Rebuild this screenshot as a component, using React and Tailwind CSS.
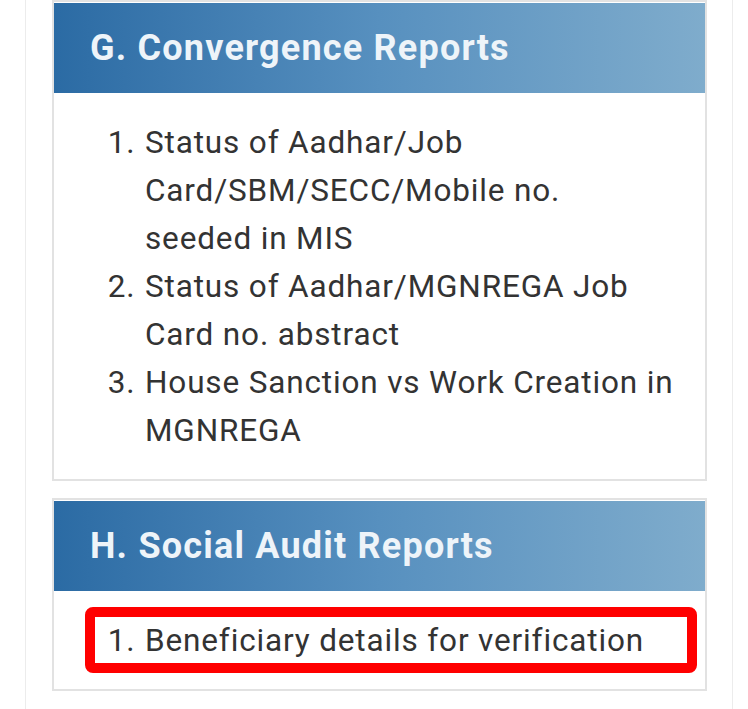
import React from "react";

const Section = ({ title, items, highlight }) => {
  return (
    <div className="border-2 border-[#e2e2e2] bg-white">
      {/* header bar */}
      <div className="mt-[1px] h-[90px] flex items-center pl-[36px] bg-gradient-to-r from-[#2b6ba4] via-[#5790bf] to-[#7faccc]">
        <h2 className="text-[36px] font-bold text-[#eef4f9] tracking-[1.2px]">{title}</h2>
      </div>

      {/* list */}
      <div className="relative pt-[26px] pb-[24px]">
        <ol className="list-decimal pl-[90px] w-[630px] text-[31.5px] leading-[48px] tracking-[0.85px] text-[#333333]">
          {items.map((item, i) => (
            <li key={i} className="pl-[1px]">
              {item}
            </li>
          ))}
        </ol>
        {highlight && (
          <div className="absolute left-[31px] right-[8px] top-[16px] h-[66px] border-[10px] border-[#ff0000] rounded-[8px]" />
        )}
      </div>
    </div>
  );
};

export default function App() {
  return (
    <div className="w-[748px] h-[709px] bg-white overflow-hidden" style={{ fontFamily: "Roboto, 'Noto Sans', sans-serif" }}>
      <div className="ml-[25px] w-[708px] h-full border-x border-[#ececec] pl-[26px] pr-[25px] flex flex-col gap-[15px]">
        <Section
          title="G. Convergence Reports"
          items={[
            <>
              Status of Aadhar/Job Card/SBM/SECC/Mobile no.
              <br />
              seeded in MIS
            </>,
            "Status of Aadhar/MGNREGA Job Card no. abstract",
            "House Sanction vs Work Creation in MGNREGA",
          ]}
        />
        <div className="pt-[2px]">
          <Section
            title="H. Social Audit Reports"
            items={["Beneficiary details for verification"]}
            highlight
          />
        </div>
      </div>
    </div>
  );
}
